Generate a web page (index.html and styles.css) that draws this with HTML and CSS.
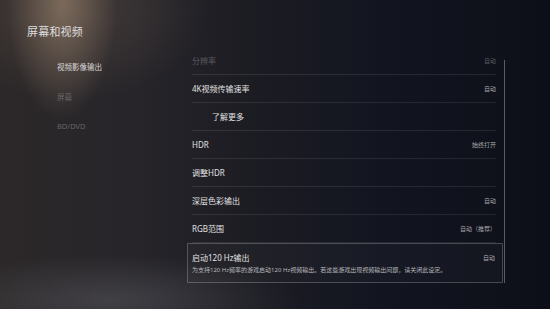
FILE: index.html
```html
<!DOCTYPE html>
<html lang="zh-CN">
<head>
    <meta charset="UTF-8">
    <meta name="viewport" content="width=device-width, initial-scale=1.0">
    <link rel="stylesheet" href="styles.css">
    <title>屏幕和视频</title>
</head>
<body>
<div class="page">
    <div class="side">
        <h1 class="title">屏幕和视频</h1>
        <ul class="nav">
            <li class="nav-item active">视频影像输出</li>
            <li class="nav-item">屏幕</li>
            <li class="nav-item">BD/DVD</li>
        </ul>
    </div>

    <div class="content">
        <div class="list">
            <div class="row faded"><span class="label">分辨率</span><span class="value">自动</span></div>
            <div class="row"><span class="label">4K视频传输速率</span><span class="value">自动</span></div>
            <div class="row"><span class="label sub">了解更多</span></div>
            <div class="row"><span class="label">HDR</span><span class="value">始终打开</span></div>
            <div class="row"><span class="label">调整HDR</span></div>
            <div class="row"><span class="label">深层色彩输出</span><span class="value">自动</span></div>
            <div class="row"><span class="label">RGB范围</span><span class="value">自动（推荐）</span></div>
            <div class="box">
                <div class="box-top"><span class="label">启动120 Hz输出</span><span class="value">自动</span></div>
                <div class="desc">为支持120 Hz频率的游戏启动120 Hz视频输出。若这些游戏出现视频输出问题，请关闭此设定。</div>
            </div>
        </div>
        <div class="scroll"></div>
    </div>
</div>
</body>
</html>
```

FILE: styles.css
```css
html, body
{
    margin: 0;
    padding: 0;
}

body
{
    width: 550px;
    height: 309px;
    overflow: hidden;
    font-family: "Noto Sans", "Noto Sans CJK SC", sans-serif;
    color: #dcdcdc;
    background:
        radial-gradient(ellipse 55px 120px at 62px 0px, rgba(170, 145, 120, 0.55), rgba(170, 145, 120, 0) 100%),
        radial-gradient(ellipse 140px 90px at 70px 10px, rgba(120, 100, 85, 0.35), rgba(120, 100, 85, 0) 100%),
        radial-gradient(ellipse 190px 45px at 110px 300px, rgba(90, 90, 96, 0.5), rgba(90, 90, 96, 0) 100%),
        linear-gradient(to right, #2c2829 0%, #27252a 25%, #1c1c23 45%, #121520 70%, #0d0f18 100%);
}

.page
{
    display: flex;
    height: 309px;
}

.side
{
    width: 187px;
    flex-shrink: 0;
}

.title
{
    margin: 25px 0 0 27px;
    font-size: 11px;
    line-height: 14px;
    font-weight: normal;
    color: #dedede;
    letter-spacing: 0.2px;
}

.nav
{
    list-style: none;
    margin: 23px 0 0 57px;
    padding: 0;
}

.nav-item
{
    font-size: 7.5px;
    line-height: 10px;
    height: 29.5px;
    color: #666468;
}

.nav-item.active
{
    color: #d6d6d6;
}

.content
{
    display: flex;
    gap: 1px;
    padding-top: 47px;
}

.list
{
    width: 316px;
}

.row
{
    display: flex;
    align-items: center;
    justify-content: space-between;
    height: 27px;
    margin: 0 7px 0 5px;
    border-bottom: 1px solid rgba(255, 255, 255, 0.09);
}

.label
{
    font-size: 8px;
    color: #e2e2e2;
}

.label.sub
{
    margin-left: 20px;
}

.value
{
    font-size: 6px;
    color: #a6a6aa;
}

.faded .label, .faded .value
{
    color: #5c5c62;
}

.box
{
    height: 38px;
    padding: 0 7px 0 4px;
    border: 1px solid rgba(255, 255, 255, 0.22);
    border-radius: 1px;
    background: rgba(255, 255, 255, 0.025);
}

.box-top
{
    display: flex;
    align-items: center;
    justify-content: space-between;
    height: 12px;
    margin-top: 7px;
}

.desc
{
    margin-top: 3px;
    font-size: 6px;
    line-height: 9px;
    color: #b8b8bc;
    white-space: nowrap;
}

.scroll
{
    width: 1px;
    height: 223px;
    margin-top: 13px;
    background: #595c68;
}
```
